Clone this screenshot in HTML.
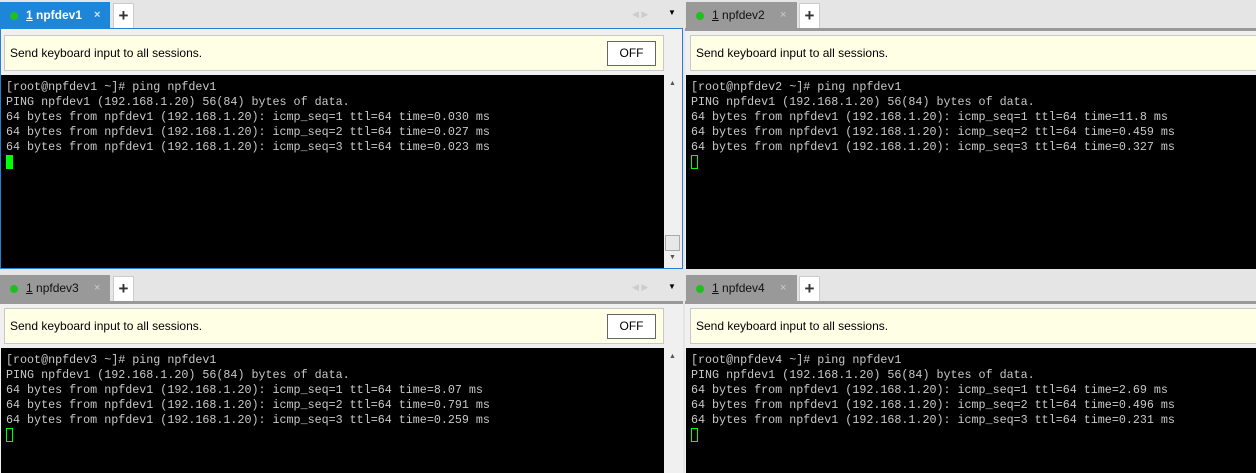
<!DOCTYPE html>
<html><head><style>
*{margin:0;padding:0;box-sizing:border-box}
body{width:1256px;height:473px;background:#e5e5e5;position:relative;overflow:hidden;font-family:"Liberation Sans",sans-serif}
.a{position:absolute}
.tab{position:absolute;height:27px;font-size:12px;color:#111;line-height:27px;padding-left:26px}
.tab .dot{position:absolute;left:10px;top:10px;width:8px;height:8px;border-radius:50%;background:#1fbf1f}
.tab .x{position:absolute;left:94px;top:0;font-size:11px;color:#999}
.plus{position:absolute;width:21px;height:25px;background:#fff;border:1px solid #ccc;border-bottom:none;font-size:17px;text-align:center;line-height:23px;color:#333;font-weight:bold}
.ban{position:absolute;height:36px;background:#ffffe6;border:1px solid #c8c8c8;font-size:12px;line-height:34px;padding-left:5px;color:#000}
.off{position:absolute;width:49px;height:25px;border:1px solid #666;background:#fff;font-size:12px;text-align:center;line-height:23px}
.term{position:absolute;background:#000;color:#c8c8c8;font-family:"Liberation Mono",monospace;font-size:11.7px;line-height:15px;padding:5px 0 0 5px;white-space:pre}
.cur{display:inline-block;width:7px;height:14px;vertical-align:-3px}
.ar{position:absolute;font-size:9px;color:#ccc}
</style></head><body>
<!-- pane 1 -->
<div class="a" style="left:0;top:28px;width:683px;height:241px;border:1px solid #2a7fd4;background:#f0f0f0"></div>
<div class="tab" style="left:0;top:2px;width:110px;background:#1d86d8;color:#fff;font-weight:bold"><span class="dot"></span><u>1</u> npfdev1<span class="x" style="color:#cfe4f7">×</span></div>
<div class="plus" style="left:113px;top:3px">+</div>
<div class="ar" style="left:632px;top:9px">◀ ▶</div><div class="a" style="left:668px;top:8px;font-size:8px">▼</div>
<div class="ban" style="left:4px;top:35px;width:660px">Send keyboard input to all sessions.</div>
<div class="off" style="left:607px;top:41px">OFF</div>
<div class="term" style="left:1px;top:75px;width:663px;height:193px">[root@npfdev1 ~]# ping npfdev1
PING npfdev1 (192.168.1.20) 56(84) bytes of data.
64 bytes from npfdev1 (192.168.1.20): icmp_seq=1 ttl=64 time=0.030 ms
64 bytes from npfdev1 (192.168.1.20): icmp_seq=2 ttl=64 time=0.027 ms
64 bytes from npfdev1 (192.168.1.20): icmp_seq=3 ttl=64 time=0.023 ms
<span class="cur" style="background:#0f0"></span></div>
<div class="a" style="left:664px;top:75px;width:18px;height:193px;background:#f0f0f0"></div>
<div class="a" style="left:669px;top:80px;font-size:7px;color:#555">▲</div>
<div class="a" style="left:665px;top:235px;width:15px;height:16px;background:#e8e8e8;border:1px solid #aaa"></div>
<div class="a" style="left:669px;top:254px;font-size:7px;color:#555">▼</div>

<!-- pane 2 -->
<div class="a" style="left:685px;top:0;width:571px;height:269px;background:#f0f0f0"></div>
<div class="a" style="left:685px;top:0;width:571px;height:28px;background:#e5e5e5"></div>
<div class="a" style="left:685px;top:28px;width:571px;height:3px;background:#999"></div>
<div class="tab" style="left:686px;top:2px;width:111px;height:28px;background:#999"><span class="dot"></span><u>1</u> npfdev2<span class="x" style="color:#ccc">×</span></div>
<div class="plus" style="left:799px;top:3px">+</div>
<div class="ban" style="left:690px;top:35px;width:570px">Send keyboard input to all sessions.</div>
<div class="term" style="left:686px;top:75px;width:570px;height:194px">[root@npfdev2 ~]# ping npfdev1
PING npfdev1 (192.168.1.20) 56(84) bytes of data.
64 bytes from npfdev1 (192.168.1.20): icmp_seq=1 ttl=64 time=11.8 ms
64 bytes from npfdev1 (192.168.1.20): icmp_seq=2 ttl=64 time=0.459 ms
64 bytes from npfdev1 (192.168.1.20): icmp_seq=3 ttl=64 time=0.327 ms
<span class="cur" style="border:1px solid #0f0"></span></div>

<!-- pane 3 -->
<div class="a" style="left:0;top:273px;width:683px;height:200px;background:#f0f0f0"></div>
<div class="a" style="left:0;top:273px;width:683px;height:28px;background:#e5e5e5"></div>
<div class="a" style="left:0;top:301px;width:683px;height:3px;background:#999"></div>
<div class="tab" style="left:0;top:275px;width:110px;height:28px;background:#999"><span class="dot"></span><u>1</u> npfdev3<span class="x" style="color:#ccc">×</span></div>
<div class="plus" style="left:113px;top:276px">+</div>
<div class="ar" style="left:632px;top:282px">◀ ▶</div><div class="a" style="left:668px;top:282px;font-size:8px">▼</div>
<div class="ban" style="left:4px;top:308px;width:660px">Send keyboard input to all sessions.</div>
<div class="off" style="left:607px;top:314px">OFF</div>
<div class="term" style="left:1px;top:348px;width:663px;height:125px">[root@npfdev3 ~]# ping npfdev1
PING npfdev1 (192.168.1.20) 56(84) bytes of data.
64 bytes from npfdev1 (192.168.1.20): icmp_seq=1 ttl=64 time=8.07 ms
64 bytes from npfdev1 (192.168.1.20): icmp_seq=2 ttl=64 time=0.791 ms
64 bytes from npfdev1 (192.168.1.20): icmp_seq=3 ttl=64 time=0.259 ms
<span class="cur" style="border:1px solid #0f0"></span></div>
<div class="a" style="left:669px;top:353px;font-size:7px;color:#555">▲</div>

<!-- pane 4 -->
<div class="a" style="left:685px;top:273px;width:571px;height:200px;background:#f0f0f0"></div>
<div class="a" style="left:685px;top:273px;width:571px;height:28px;background:#e5e5e5"></div>
<div class="a" style="left:685px;top:301px;width:571px;height:3px;background:#999"></div>
<div class="tab" style="left:686px;top:275px;width:111px;height:28px;background:#999"><span class="dot"></span><u>1</u> npfdev4<span class="x" style="color:#ccc">×</span></div>
<div class="plus" style="left:799px;top:276px">+</div>
<div class="ban" style="left:690px;top:308px;width:570px">Send keyboard input to all sessions.</div>
<div class="term" style="left:686px;top:348px;width:570px;height:125px">[root@npfdev4 ~]# ping npfdev1
PING npfdev1 (192.168.1.20) 56(84) bytes of data.
64 bytes from npfdev1 (192.168.1.20): icmp_seq=1 ttl=64 time=2.69 ms
64 bytes from npfdev1 (192.168.1.20): icmp_seq=2 ttl=64 time=0.496 ms
64 bytes from npfdev1 (192.168.1.20): icmp_seq=3 ttl=64 time=0.231 ms
<span class="cur" style="border:1px solid #0f0"></span></div>
</body></html>
